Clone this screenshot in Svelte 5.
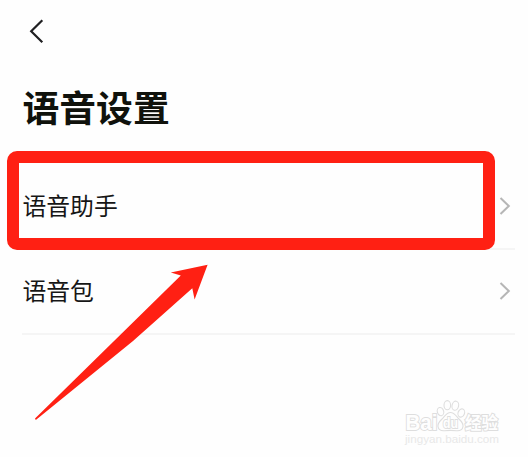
<script lang="ts">
  type Item = { id: string; label: string };

  const title = '语音设置';
  const items: Item[] = [
    { id: 'assistant', label: '语音助手' },
    { id: 'pack', label: '语音包' },
  ];

  let marked = $state('assistant');
</script>

<main class="page">
  <header class="topbar">
    <button class="back" aria-label="返回">
      <svg width="16" height="26" viewBox="0 0 16 26">
        <path d="M13.3 2.2 2.2 13.2 13.3 24.2" />
      </svg>
    </button>
  </header>

  <h1 class="title">{title}</h1>

  <div class="list">
    {#each items as item (item.id)}
      <button class="row" class:marked={marked === item.id} onclick={() => (marked = item.id)}>
        <span class="label">{item.label}</span>
        <svg class="chevron" width="12" height="20" viewBox="0 0 12 20">
          <path d="M1.5 2 9.8 10 1.5 18" />
        </svg>
      </button>
    {/each}
  </div>

  <!-- pointer to the marked row -->
  <svg class="arrow" width="180" height="160" viewBox="30 262 180 160">
    <path d="M207.6 264.8 170.8 272.4 180.8 275.5 35 418.4 35.8 420 133 341 192.3 288.3 194.6 299.5Z" />
  </svg>

  <svg class="watermark" width="110" height="52" viewBox="400 398 110 52">
    <g class="outline">
      <text x="405.5" y="429.5" font-size="22" textLength="32" lengthAdjust="spacingAndGlyphs">Bai</text>
      <path d="M450.5 412.5c-4 0-5.5 3.500-8.500 6.500-3 2.800-4.500 4.500-4 7.500.5 3.200 3 4.500 6.500 4.200 4-.4 8-.4 12 0 3.500.3 6-1 6.500-4.200.4-3-1-4.700-4-7.500-3-3-4.500-6.500-8.500-6.500z" />
      <ellipse cx="440.5" cy="411.6" rx="3.200" ry="4.200" transform="rotate(-15 440.5 411.6)" />
      <ellipse cx="447.3" cy="405.2" rx="3.300" ry="4.600" />
      <ellipse cx="455.3" cy="405.7" rx="3.300" ry="4.600" transform="rotate(12 455.3 405.7)" />
      <ellipse cx="461.3" cy="413" rx="3.200" ry="4.200" transform="rotate(22 461.3 413)" />
      <text class="du" x="443" y="428" font-size="15" textLength="15" lengthAdjust="spacingAndGlyphs">du</text>
      <text class="cn" x="465" y="429" font-size="16.5">经验</text>
    </g>
    <text class="url" x="405" y="442.5" font-size="10.5" textLength="94" lengthAdjust="spacingAndGlyphs">jingyan.baidu.com</text>
  </svg>
</main>

<style>
  :global(body) {
    background: #fefefe;
  }

  .page {
    position: relative;
    box-sizing: border-box;
    width: 528px;
    height: 457px;
    overflow: hidden;
    background: #fefefe;
    color: #161616;
    font-family: 'Noto Sans CJK SC', 'Noto Sans', sans-serif;
  }

  button {
    margin: 0;
    padding: 0;
    border: 0;
    background: none;
    color: inherit;
    font: inherit;
    text-align: left;
  }

  .topbar {
    display: flex;
    align-items: center;
    height: 60px;
    padding: 1px 0 0 29px;
    box-sizing: border-box;
  }

  .back {
    display: flex;
  }

  .back path {
    fill: none;
    stroke: #202022;
    stroke-width: 2.2;
  }

  .title {
    box-sizing: border-box;
    height: 83px;
    margin: 0;
    padding: 20px 0 0 22.5px;
    font-size: 36.8px;
    font-weight: 700;
    line-height: 52px;
    color: #10120c;
  }

  .list {
    padding: 22px 13px 0 22px;
  }

  .row {
    position: relative;
    display: flex;
    align-items: center;
    justify-content: space-between;
    box-sizing: border-box;
    width: 100%;
    height: 85px;
    padding: 0 4px 2px 0;
    border-bottom: 2px solid #f5f5f5;
  }

  .label {
    padding: 0 0 2px 0.5px;
    font-size: 23.8px;
    line-height: 36px;
  }

  .chevron path {
    fill: none;
    stroke: #b6b6b6;
    stroke-width: 2;
  }

  .marked::after {
    content: '';
    position: absolute;
    left: -15px;
    top: -14px;
    width: 464px;
    height: 75px;
    border: 12px solid #ff2013;
    border-radius: 10px;
  }

  .arrow {
    position: absolute;
    left: 30px;
    top: 262px;
  }

  .arrow path {
    fill: #ff2013;
  }

  .watermark {
    position: absolute;
    left: 400px;
    top: 398px;
    font-family: 'Liberation Sans', Arial, sans-serif;
    font-weight: 700;
  }

  /* Stroke goes under the fill so the letters stay hollow. */
  .outline {
    fill: #fefefe;
    stroke: #dedede;
    stroke-width: 1.1;
  }

  .outline text {
    paint-order: stroke;
    stroke-width: 2;
  }

  .outline .cn {
    font-family: 'Noto Sans CJK SC', sans-serif;
  }

  .url {
    fill: #e8e8e8;
    font-weight: 400;
  }
</style>
